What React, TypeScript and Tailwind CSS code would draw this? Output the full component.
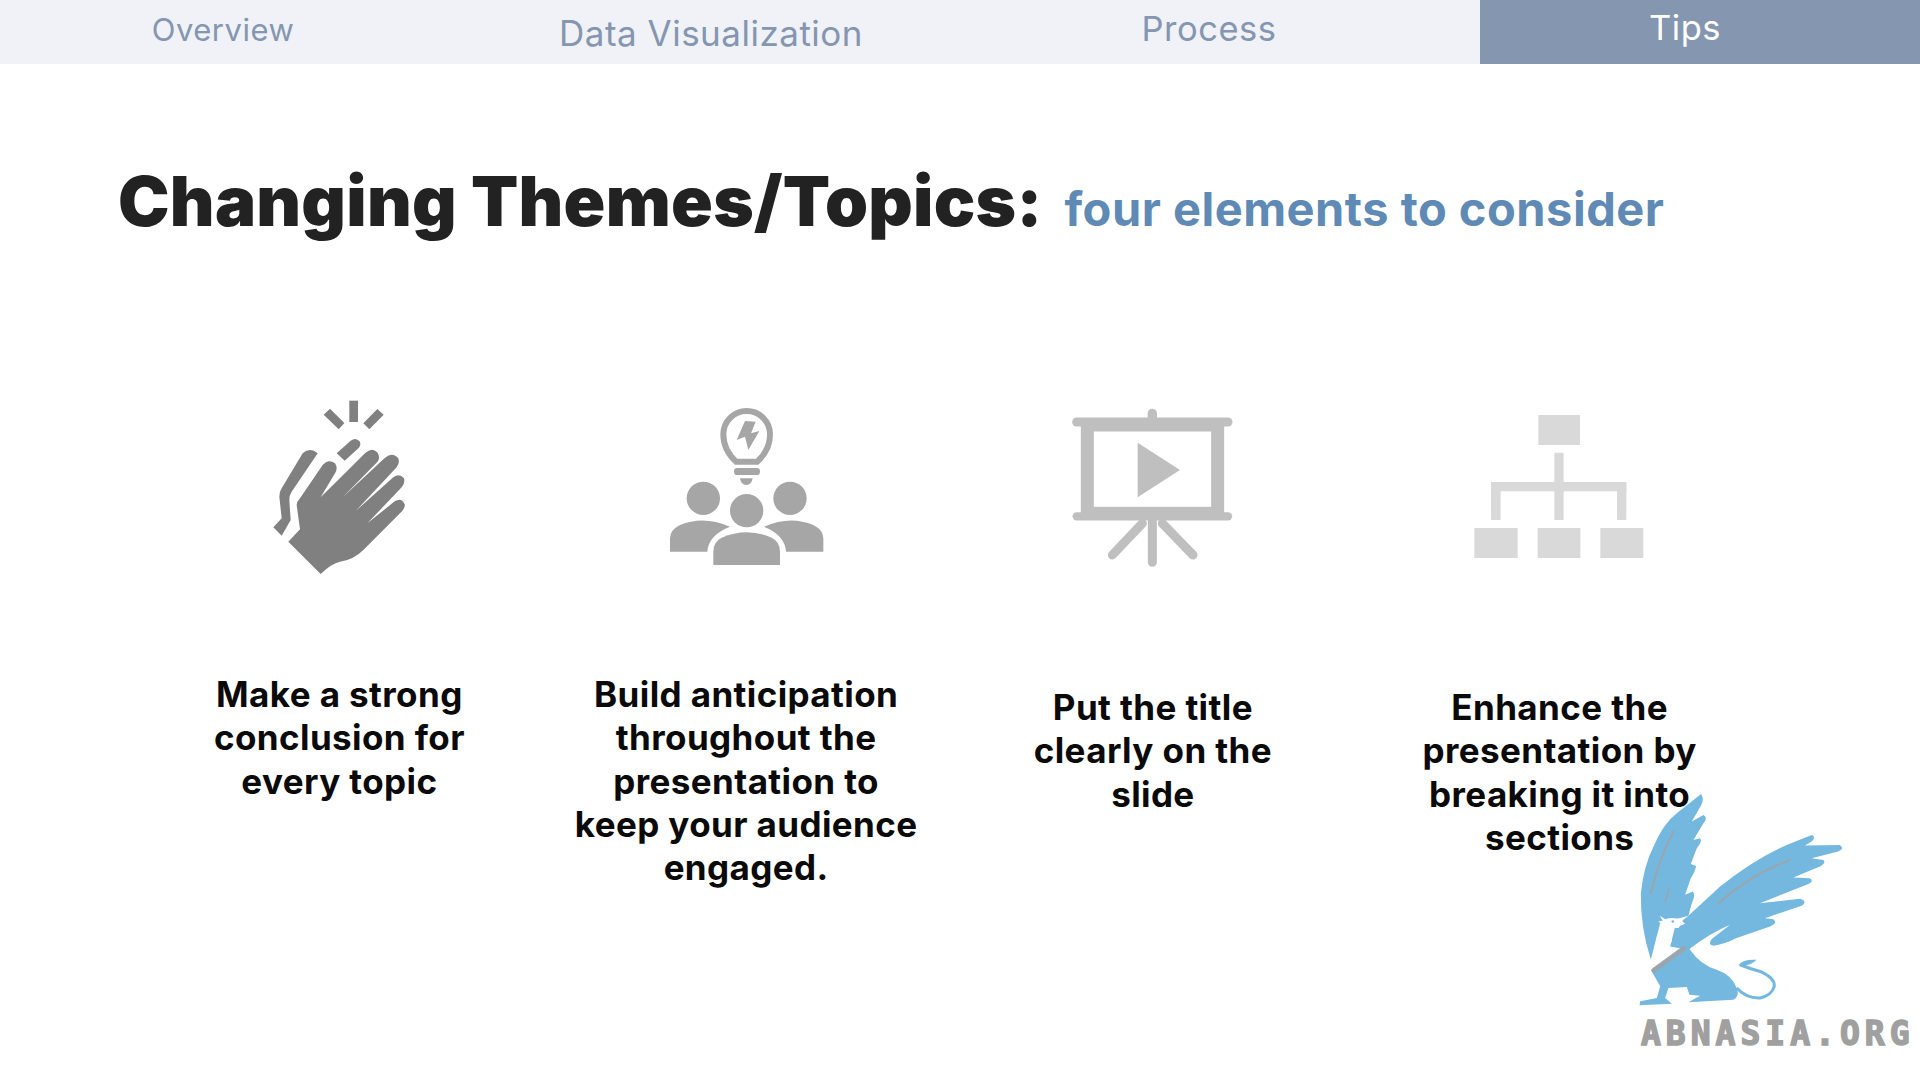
import React from "react";

const tabs = [
  { label: "Overview", cls: "w-[446px] pb-[4px] text-[31px] text-[#8496b0]" },
  { label: "Data Visualization", cls: "w-[530px] pt-[3px] text-[35px] text-[#8496b0]" },
  { label: "Process", cls: "w-[504px] pr-[38px] pb-[7px] text-[34.5px] text-[#8496b0]" },
  { label: "Tips", cls: "w-[440px] pr-[30px] pb-[8px] text-[34.5px] bg-[#8496b0] text-white" },
];

function Clap() {
  return (
    <svg viewBox="-18 0 570 570" className="w-[190px] h-[190px]" fill="#808080">
      <rect x="298" y="32" width="26" height="64" />
      <polygon points="240,56 283,99 266,118 221,74" />
      <polygon points="382,57 401,74 358,118 340,100" />
      <path d="M260 190 L302 152 Q318 140 330 155 Q334 168 322 178 L284 212 Z" />
      <path d="M158 190 Q180 170 203 190 L125 305 Q118 315 118 330 L122 390 L95 437 L70 412 L95 385 L88 320 Q88 305 95 295 Z" />
      <path d="M115 455 L150 418 L140 345 Q140 335 150 325 L218 225 Q235 205 255 220 Q265 235 255 250 L212 322 L345 190 Q365 170 383 188 Q392 205 382 216 L278 322 L405 203 Q428 185 445 205 Q450 220 440 232 L318 362 L430 262 Q448 248 462 265 Q466 280 455 292 L352 400 L434 334 Q455 320 465 345 Q462 360 450 370 L340 480 Q310 510 270 515 Q245 520 212 552 Z" />
    </svg>
  );
}

function People() {
  return (
    <svg viewBox="3 -15 570 570" className="w-[190px] h-[190px]" fill="#a6a6a6">
      <path d="M258 200 Q220 165 220 118 A70 70 0 0 1 360 118 Q360 165 322 200 Z" fill="none" stroke="#a6a6a6" strokeWidth="18" />
      <polygon points="285,78 260,135 285,125 295,165 328,108 303,115 317,80" />
      <rect x="252" y="219" width="78" height="21" rx="10" />
      <path d="M270 250 H308 Q305 270 289 270 Q273 270 270 250 Z" />
      <circle cx="160" cy="310" r="50" />
      <circle cx="420" cy="310" r="50" />
      <circle cx="290" cy="347" r="50" />
      <path d="M190 510 V470 Q190 440 215 428 Q290 395 365 428 Q390 440 390 470 V510 Z" />
      <path d="M60 470 V430 Q60 405 90 390 Q160 360 240 395 Q175 420 172 470 Z" />
      <path d="M520 470 V430 Q520 405 490 390 Q420 360 342 395 Q405 420 408 470 Z" />
    </svg>
  );
}

function Screen() {
  return (
    <svg viewBox="9 -15 570 570" className="w-[190px] h-[190px]" fill="#bfbfbf">
      <g stroke="#bfbfbf" strokeLinecap="round" fill="none">
        <path d="M292 55 V80" strokeWidth="28" />
        <path d="M65 81 H519" strokeWidth="27" />
        <path d="M65 364 H519" strokeWidth="25" />
        <path d="M292 370 V502" strokeWidth="27" />
        <path d="M262 385 L172 480" strokeWidth="27" />
        <path d="M322 385 L414 480" strokeWidth="27" />
        <rect x="97" y="90" width="391" height="265" strokeWidth="39" />
      </g>
      <polygon points="248,143 375,225 248,307" />
    </svg>
  );
}

function Tree() {
  return (
    <svg viewBox="15 -30 570 570" className="w-[190px] h-[190px]" fill="#d9d9d9">
      <rect x="235" y="45" width="125" height="90" />
      <rect x="43" y="384" width="130" height="90" />
      <rect x="233" y="384" width="128" height="90" />
      <rect x="421" y="384" width="129" height="90" />
      <rect x="283" y="158" width="28" height="202" rx="3" />
      <rect x="93" y="246" width="406" height="28" />
      <rect x="93" y="246" width="29" height="114" rx="3" />
      <rect x="471" y="246" width="28" height="114" rx="3" />
    </svg>
  );
}

function Griffin() {
  return (
    <svg viewBox="0 0 900 700" className="w-[300px] h-[233px]">
      <g fill="#74b8e0">
        <path d="M243 42 C252 55 248 70 238 85 L215 125 L250 105 Q265 112 250 130 L220 180 L240 175 Q248 185 230 205 L212 252 L228 258 Q225 275 212 295 L195 345 L218 335 Q228 345 215 370 L205 408 L120 430 L92 540 Q60 440 62 340 Q70 260 100 200 Q130 130 170 100 Z" />
        <path d="M205 408 L300 320 Q400 240 500 195 L575 165 Q590 170 575 185 L555 197 L660 195 Q675 205 655 215 L575 235 L610 240 Q620 250 600 260 L520 293 L570 295 Q585 305 560 315 L420 370 L540 357 Q565 365 545 378 L435 415 L460 418 Q475 430 450 440 L350 475 Q310 495 280 498 Q262 495 275 478 L330 435 Q270 460 205 510 L150 500 L165 440 Z" />
      </g>
      <g transform="translate(30 360)">
        <path d="M65 215 L100 185 L170 135 L180 150 Q210 195 260 210 Q305 225 320 265 Q330 290 310 300 L175 308 L210 288 L178 285 L170 262 L115 265 L105 295 L125 312 L28 317 L30 305 L80 295 L90 260 Z" fill="#74b8e0" />
        <path d="M320 265 Q350 297 390 295 Q425 287 433 260 Q435 235 395 217 Q360 207 330 195" fill="none" stroke="#74b8e0" strokeWidth="9" />
        <path d="M325 197 Q335 178 380 180 Q365 195 345 197 Z" fill="#74b8e0" />
        <path d="M88 47 L105 58 Q130 50 155 62 L165 72 L150 78 L145 85 L128 85 L122 100 L125 125 L110 145 L85 170 L105 145 L85 150 L65 180 L80 110 L95 75 L85 65 L98 62 Z" fill="#ffffff" />
        <circle cx="128" cy="65" r="4" fill="#74b8e0" />
      </g>
      <g fill="none" stroke="#9aa5ad" strokeLinecap="round">
        <path d="M160 155 Q115 240 92 340" strokeWidth="6" />
        <path d="M147 325 L135 365" strokeWidth="5" />
        <path d="M510 240 Q390 285 295 370" strokeWidth="6" />
        <path d="M192 505 L100 572" strokeWidth="14" />
      </g>
    </svg>
  );
}

const items = [
  { icon: <Clap />, text: ["Make a strong", "conclusion for", "every topic"], cls: "pt-[93px]" },
  { icon: <People />, text: ["Build anticipation", "throughout the", "presentation to", "keep your audience", "engaged."], cls: "pt-[93px]" },
  { icon: <Screen />, text: ["Put the title", "clearly on the", "slide"], cls: "pt-[106px]" },
  { icon: <Tree />, text: ["Enhance the", "presentation by", "breaking it into", "sections"], cls: "pt-[106px]" },
];

export default function App() {
  return (
    <div className="relative w-[1920px] h-[1080px] overflow-hidden bg-white font-['Inter',sans-serif]">
      <div className="flex h-[64px] bg-[#f0f2f7]">
        {tabs.map((t) => (
          <div key={t.label} className={`flex items-center justify-center tracking-[0.5px] ${t.cls}`}>
            {t.label}
          </div>
        ))}
      </div>

      <div className="flex items-baseline pl-[118px] mt-[92px] gap-[22px]">
        <h1 className="text-[69px] leading-[90px] font-black tracking-[0.25px] text-[#222222]">Changing Themes/Topics:</h1>
        <p className="text-[47px] font-bold tracking-[0.5px] text-[#5f8ab5]">four elements to consider</p>
      </div>

      <div className="grid grid-cols-4 w-[1627px] ml-[136px] mt-[144px]">
        {items.map((it, i) => (
          <div key={i} className="flex flex-col items-center">
            {it.icon}
            <div className={`text-center text-[35px] leading-[43.3px] tracking-[0.4px] font-bold text-[#0a0a0a] ${it.cls}`}>
              {it.text.map((l) => (
                <div key={l} className="whitespace-nowrap">{l}</div>
              ))}
            </div>
          </div>
        ))}
      </div>

      <div className="absolute left-[1620px] top-[780px] w-[300px]">
        <Griffin />
        <div className="mt-[6px] ml-[21px] font-['DejaVu_Sans_Mono',monospace] font-bold text-[33px] leading-[30px] tracking-[5px] text-[#a0a0a0] whitespace-nowrap [-webkit-text-stroke:1.5px_#a0a0a0]">
          ABNASIA.ORG
        </div>
      </div>
    </div>
  );
}
